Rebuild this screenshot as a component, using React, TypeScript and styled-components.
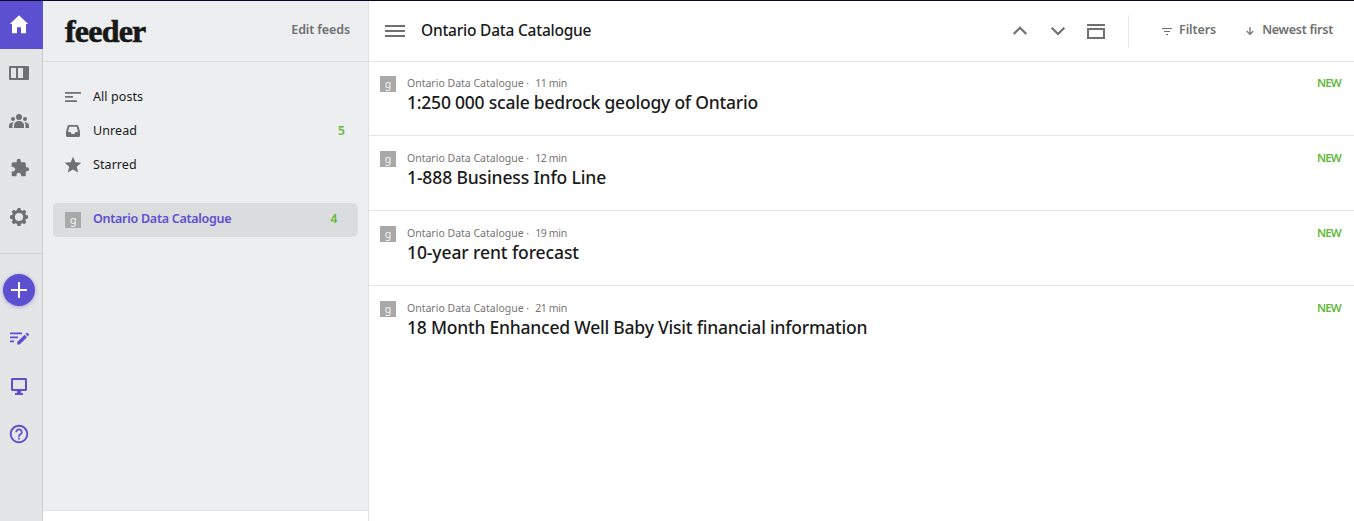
import React from 'react';
import styled, { createGlobalStyle } from 'styled-components';
import { MdExtension, MdHelpOutline, MdStar } from 'react-icons/md';

const purple = '#5c4fd0';
const grey = '#707070';
const green = '#62b93c';

const GlobalStyle = createGlobalStyle`
  * { box-sizing: border-box; }
  body { margin: 0; background: #fff; font-family: "Noto Sans", "Open Sans", sans-serif; color: #1a1a1a; }
  button { border: 0; padding: 0; background: none; font: inherit; color: inherit; }
  svg { display: block; flex: none; overflow: visible; }
`;

const Page = styled.div`
  display: flex;
  height: 521px;
  border-top: 1px solid #0d0628;
  overflow: hidden;
  white-space: nowrap;
`;

const Rail = styled.nav`
  width: 43px;
  flex: none;
  background: #e4e5e6;
  border-right: 1px solid #cbccce;
  display: flex;
  flex-direction: column;
`;

const RailButton = styled.button<{ $active?: boolean; $tone?: string }>`
  width: ${p => (p.$active ? 43 : 42)}px;
  height: 48px;
  flex: none;
  padding-right: ${p => (p.$active ? 5 : 4)}px;
  display: flex;
  align-items: center;
  justify-content: center;
  background: ${p => (p.$active ? purple : 'transparent')};
  color: ${p => p.$tone || (p.$active ? '#fff' : grey)};
`;

const RailDivider = styled.div`
  height: 1px;
  margin: 12px 0;
  background: #cfd0d2;
`;

const AddCircle = styled.span`
  width: 32px;
  height: 32px;
  flex: none;
  border-radius: 50%;
  background: ${purple};
  box-shadow: 0 1px 4px rgba(92, 79, 208, 0.45);
  display: grid;
  place-items: center;
  color: #fff;
`;

const Sidebar = styled.aside`
  width: 326px;
  flex: none;
  display: flex;
  flex-direction: column;
  background: #edeef0;
  border-right: 1px solid #dfe0e2;
`;

const SidebarHeader = styled.header`
  height: 61px;
  flex: none;
  border-bottom: 1px solid #dedfe1;
  padding: 0 18px 3px 22px;
  display: flex;
  align-items: center;
  justify-content: space-between;
`;

const Logo = styled.div`
  padding-top: 2px;
  font: bold 32px/40px "Liberation Serif", serif;
  letter-spacing: -0.8px;
  color: #181818;
  -webkit-text-stroke: 0.6px #181818;
`;

const EditLink = styled.button`
  font-size: 12.5px;
  font-weight: 600;
  letter-spacing: -0.12px;
  color: ${grey};
`;

const NavList = styled.div`
  flex: 1;
  padding: 18px 10px 0;
`;

const NavRow = styled.div<{ $selected?: boolean }>`
  height: 34px;
  margin-top: ${p => (p.$selected ? 21 : 0)}px;
  padding: 0 ${p => (p.$selected ? 21 : 13)}px 0 12px;
  border-radius: 5px;
  background: ${p => (p.$selected ? '#dbdcde' : 'transparent')};
  color: ${p => (p.$selected ? purple : '#1a1a1a')};
  font-size: 12.5px;
  font-weight: ${p => (p.$selected ? 600 : 400)};
  letter-spacing: ${p => (p.$selected ? -0.27 : 0.08)}px;
  display: flex;
  align-items: center;
  > span + span { padding-bottom: ${p => (p.$selected ? 3 : 1)}px; }
`;

const NavIcon = styled.span`
  width: 28px;
  color: ${grey};
`;

const NavLabel = styled.span`
  flex: 1;
`;

const Count = styled.span`
  font-size: 12px;
  font-weight: 600;
  color: ${green};
`;

const Favicon = styled.span`
  width: 16px;
  height: 16px;
  flex: none;
  background: #a9a9a9;
  color: #f6f6f6;
  display: block;
  text-align: center;
  font-size: 10.5px;
  font-weight: 400;
  line-height: 17px;
`;

const SidebarFooter = styled.div`
  height: 11px;
  flex: none;
  background: #fff;
  border-top: 1px solid #e4e5e7;
`;

const Main = styled.main`
  flex: 1;
  min-width: 0;
`;

const Toolbar = styled.header`
  height: 61px;
  border-bottom: 1px solid #e6e6e6;
  padding: 0 21px 0 16px;
  display: flex;
  align-items: center;
  color: ${grey};
`;

const Heading = styled.h1`
  margin: 0 auto 0 16px;
  padding-bottom: 2px;
  font-size: 15.5px;
  font-weight: 500;
  letter-spacing: -0.23px;
  color: #1a1a1a;
`;

const ToolButtons = styled.div`
  display: flex;
  gap: 20px;
  padding-right: 23px;
`;

const Separator = styled.div`
  width: 1px;
  height: 32px;
  background: #e8e8e8;
`;

const ToolAction = styled.button<{ $before: number; $gap: number; $spacing: number }>`
  display: flex;
  align-items: center;
  gap: ${p => p.$gap}px;
  margin-left: ${p => p.$before}px;
  font-size: 12.5px;
  font-weight: 600;
  letter-spacing: ${p => p.$spacing}px;
  > span { padding-bottom: 3px; }
`;

const Post = styled.article`
  height: 75px;
  padding: 15px 12px 0 11px;
  display: flex;
  &:not(:last-child) { border-bottom: 1px solid #e6e6e6; }
  &:first-of-type { height: 74px; padding-top: 14px; }
`;

const PostBody = styled.div`
  flex: 1;
  margin: -1px 0 0 11px;
`;

const Meta = styled.div`
  display: flex;
  font-size: 10.5px;
  line-height: 16px;
  color: #757575;
`;

const Age = styled.span`
  margin-left: 6px;
  letter-spacing: -0.35px;
`;

const PostTitle = styled.h2<{ $spacing: number }>`
  margin: 0;
  font-size: 17.5px;
  line-height: 22px;
  font-weight: 500;
  letter-spacing: ${p => p.$spacing}px;
`;

const NewTag = styled.span`
  margin-top: -1px;
  font-size: 11.5px;
  line-height: 16px;
  font-weight: 600;
  letter-spacing: -0.8px;
  padding-right: 1px;
  color: ${green};
`;

const HomeIcon = () => (
  <svg width="20" height="20" viewBox="0 0 20 20" fill="currentColor">
    <path d="M10 .2 19.200 9H17v9.200h-5V12.200H8v6H3V9H.8z" />
  </svg>
);

const BoardIcon = () => (
  <svg width="20" height="14" viewBox="0 0 20 14" fill="currentColor">
    <path fillRule="evenodd" d="M1 0h18a1 1 0 0 1 1 1v12a1 1 0 0 1-1 1H1a1 1 0 0 1-1-1V1a1 1 0 0 1 1-1zm1 2v10h5V2zm7 0v10h5V2z" />
  </svg>
);

const PeopleIcon = () => (
  <svg width="20" height="14" viewBox="0 0 20 14" fill="currentColor">
    <circle cx="10" cy="3" r="3" />
    <circle cx="4" cy="5" r="2" />
    <circle cx="16" cy="5" r="2" />
    <path d="M5 14v-2.500C5 8.700 7.300 7 10 7s5 1.700 5 4.500V14z" />
    <path d="M0 14v-2.500C0 9.700 1.600 8.200 4.300 8 3.700 9 3.500 10.200 3.500 11.500V14zM20 14v-2.500c0-1.800-1.600-3.300-4.300-3.500.6 1 .8 2.200.8 3.500V14z" />
  </svg>
);

const PluginIcon = styled(MdExtension)`
  margin: -2px 0 0 2px;
`;

const GearIcon = () => (
  <svg width="18" height="18" viewBox="-9 -9 18 18" fill="currentColor">
    {[0, 45, 90, 135].map(a => (
      <g key={a} transform={`rotate(${a})`}>
        <path d="M-1.400-9h2.800l.9 3h-4.600zM-1.400 9h2.800l.9-3h-4.600z" />
      </g>
    ))}
    <circle r="5.600" fill="none" stroke="currentColor" strokeWidth="3" />
  </svg>
);

const PlusIcon = () => (
  <svg width="16" height="16" viewBox="0 0 16 16" fill="currentColor">
    <path d="M7 0h2v7h7v2H9v7H7V9H0V7h7z" />
  </svg>
);

const ComposeIcon = () => (
  <svg width="19" height="13" viewBox="0 0 19 13" fill="currentColor">
    <path d="M0 .5h12v1.800H0zM0 4.500h8v1.800H0zM0 8.500h4v1.800H0zM7.200 12.500V10l7.400-7.200 2.400 2.400-7.300 7.300zM15.500 1.900l1-1a.8.8 0 0 1 1.100 0l1.200 1.200a.8.8 0 0 1 0 1.100l-1 1z" />
  </svg>
);

const MonitorIcon = () => (
  <svg width="16" height="17" viewBox="0 0 16 17" fill="currentColor">
    <path fillRule="evenodd" d="M1 0h14l1 1v11l-1 1h-5v2h2v2H4v-2h2v-2H1l-1-1V1zm1 2v9h12V2z" />
  </svg>
);

const PostsIcon = () => (
  <svg width="16" height="10" viewBox="0 0 16 10" fill="currentColor">
    <path d="M0 0h16v1.800H0zM0 4h8v1.800H0zM0 8.200h12V10H0z" />
  </svg>
);

const InboxIcon = () => (
  <svg width="16" height="12" viewBox="0 0 16 12" fill="currentColor">
    <path fillRule="evenodd" d="M4 0h8a1.500 1.500 0 0 1 1.400 1L15 6.500v4a1.500 1.500 0 0 1-1.500 1.500h-11A1.500 1.500 0 0 1 1 10.500v-4L2.600 1A1.500 1.500 0 0 1 4 0zm.4 1.700L3 7h2.500l1.200 2h2.600l1.200-2H13l-1.400-5.300z" />
  </svg>
);

const StarIcon = styled(MdStar)`
  margin-left: -2px;
`;

const MenuIcon = () => (
  <svg width="20" height="12" viewBox="0 0 20 12" fill="currentColor">
    <path d="M0 0h20v2H0zM0 5h20v2H0zM0 10h20v2H0z" />
  </svg>
);

const Chevron = ({ down }: { down?: boolean }) => (
  <svg width="18" height="16" viewBox="0 0 18 16" fill="none" stroke="currentColor" strokeWidth="2.200">
    <path d={down ? 'M2.700 4.700 9 11l6.300-6.300' : 'M2.700 11 9 4.700l6.300 6.300'} />
  </svg>
);

const LayoutIcon = () => (
  <svg width="18" height="16" viewBox="0 0 18 16" fill="currentColor">
    <path fillRule="evenodd" d="M0 1h18v2H0zM0 5h18v11H0zm2 2v7h14V7z" />
  </svg>
);

const FilterIcon = () => (
  <svg width="10" height="7" viewBox="0 0 10 7" fill="currentColor">
    <path d="M0 0h10v1H0zM2 3h6v1H2zM4 6h2v1H4z" />
  </svg>
);

const ArrowIcon = () => (
  <svg width="8" height="8" viewBox="0 0 8 8" fill="none" stroke="currentColor" strokeWidth="1.200">
    <path d="M4 0v7M.7 4 4 7.300 7.300 4" />
  </svg>
);

const feed = 'Ontario Data Catalogue';

const posts = [
  { age: '11 min', title: '1:250 000 scale bedrock geology of Ontario', spacing: -0.22 },
  { age: '12 min', title: '1-888 Business Info Line', spacing: -0.13 },
  { age: '19 min', title: '10-year rent forecast', spacing: -0.1 },
  { age: '21 min', title: '18 Month Enhanced Well Baby Visit financial information', spacing: -0.22 },
];

export default function App() {
  return (
    <>
      <GlobalStyle />
      <Page>
        <Rail>
          <RailButton $active><HomeIcon /></RailButton>
          <RailButton><BoardIcon /></RailButton>
          <RailButton><PeopleIcon /></RailButton>
          <RailButton><PluginIcon size={20} /></RailButton>
          <RailButton><GearIcon /></RailButton>
          <RailDivider />
          <RailButton><AddCircle><PlusIcon /></AddCircle></RailButton>
          <RailButton $tone={purple}><ComposeIcon /></RailButton>
          <RailButton $tone={purple}><MonitorIcon /></RailButton>
          <RailButton $tone={purple}><MdHelpOutline size={22} /></RailButton>
        </Rail>
        <Sidebar>
          <SidebarHeader>
            <Logo>feeder</Logo>
            <EditLink>Edit feeds</EditLink>
          </SidebarHeader>
          <NavList>
            <NavRow><NavIcon><PostsIcon /></NavIcon><NavLabel>All posts</NavLabel></NavRow>
            <NavRow><NavIcon><InboxIcon /></NavIcon><NavLabel>Unread</NavLabel><Count>5</Count></NavRow>
            <NavRow><NavIcon><StarIcon size={20} /></NavIcon><NavLabel>Starred</NavLabel></NavRow>
            <NavRow $selected><NavIcon><Favicon>g</Favicon></NavIcon><NavLabel>{feed}</NavLabel><Count>4</Count></NavRow>
          </NavList>
          <SidebarFooter />
        </Sidebar>
        <Main>
          <Toolbar>
            <MenuIcon />
            <Heading>{feed}</Heading>
            <ToolButtons>
              <Chevron />
              <Chevron down />
              <LayoutIcon />
            </ToolButtons>
            <Separator />
            <ToolAction $before={33} $gap={7} $spacing={-0.1}><FilterIcon /><span>Filters</span></ToolAction>
            <ToolAction $before={30} $gap={8} $spacing={-0.26}><ArrowIcon /><span>Newest first</span></ToolAction>
          </Toolbar>
          {posts.map(post => (
            <Post key={post.title}>
              <Favicon>g</Favicon>
              <PostBody>
                <Meta>{feed} ·<Age>{post.age}</Age></Meta>
                <PostTitle $spacing={post.spacing}>{post.title}</PostTitle>
              </PostBody>
              <NewTag>NEW</NewTag>
            </Post>
          ))}
        </Main>
      </Page>
    </>
  );
}
